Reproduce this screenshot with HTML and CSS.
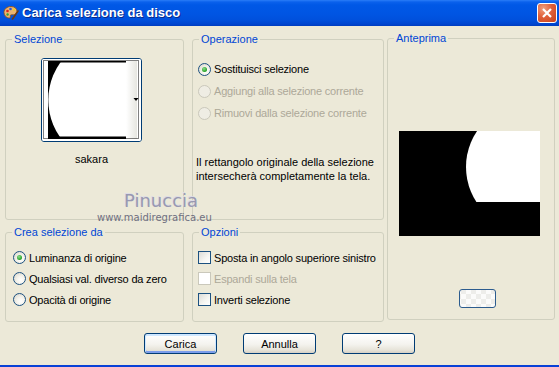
FILE: index.html
```html
<!DOCTYPE html>
<html>
<head>
<meta charset="utf-8">
<title>Carica selezione da disco</title>
<link rel="stylesheet" href="styles.css">
</head>
<body>
<div class="window">
    <div class="titlebar">
        <svg class="app-icon" viewBox="0 0 16 16">
            <path d="M8 1.5C4 1.5 1 4 1 7.5c0 3 2.5 5.5 5 5.5 1.3 0 1.6-.8 1.3-1.6-.3-.9.3-1.6 1.2-1.6h2c2 0 3.5-1.3 3.5-3.3C14 3.5 11.5 1.5 8 1.5z" fill="#E9B472" stroke="#8A4B14" stroke-width="0.8"/>
            <circle cx="4.5" cy="6" r="1.3" fill="#D8241C"/>
            <circle cx="7.5" cy="4" r="1.3" fill="#2C5AE0"/>
            <circle cx="11" cy="4.6" r="1.2" fill="#F2D21B"/>
            <circle cx="4.6" cy="9.5" r="1.2" fill="#2FA33A"/>
            <path d="M15 6L9.5 14" stroke="#6B3A12" stroke-width="1.6" stroke-linecap="round"/>
        </svg>
        <span class="title">Carica selezione da disco</span>
        <div class="close-btn">
            <svg width="18" height="18" viewBox="0 0 18 18"><path d="M5 5L13 13M13 5L5 13" stroke="#fff" stroke-width="2.2"/></svg>
        </div>
    </div>
    <div class="client">
        <div class="panes">
            <div class="col col-left">
                <fieldset class="group group-sel">
                    <legend>Selezione</legend>
                    <div class="thumb-wrap">
                        <div class="thumb">
                            <svg width="99" height="82" viewBox="0 0 99 82">
                                <defs>
                                    <clipPath id="tc"><rect x="6" y="3.5" width="78" height="74"/></clipPath>
                                    <linearGradient id="strip" x1="0" x2="1"><stop offset="0" stop-color="#fff"/><stop offset="1" stop-color="#E6E6E0"/></linearGradient>
                                </defs>
                                <rect width="99" height="82" fill="#fff"/>
                                <rect x="84" y="2" width="11" height="78" fill="url(#strip)"/>
                                <rect x="6" y="2" width="78" height="78" fill="#000"/>
                                <circle cx="70.7" cy="41" r="64.4" fill="#fff" clip-path="url(#tc)"/>
                                <path d="M91.5 39h5l-2.5 3z" fill="#000"/>
                                <rect x="1.5" y="1.5" width="95" height="78" fill="none" stroke="#000" stroke-dasharray="1 1"/>
                            </svg>
                        </div>
                        <div class="thumb-name">sakara</div>
                    </div>
                </fieldset>
                <fieldset class="group group-crea">
                    <legend>Crea selezione da</legend>
                    <div class="opts">
                        <div class="opt"><span class="radio checked"></span>Luminanza di origine</div>
                        <div class="opt"><span class="radio"></span>Qualsiasi val. diverso da zero</div>
                        <div class="opt"><span class="radio"></span>Opacità di origine</div>
                    </div>
                </fieldset>
            </div>
            <div class="col col-mid">
                <fieldset class="group group-op">
                    <legend>Operazione</legend>
                    <div class="opts">
                        <div class="opt"><span class="radio checked"></span>Sostituisci selezione</div>
                        <div class="opt off"><span class="radio"></span>Aggiungi alla selezione corrente</div>
                        <div class="opt off"><span class="radio"></span>Rimuovi dalla selezione corrente</div>
                    </div>
                    <p class="note">Il rettangolo originale della selezione<br>intersecherà completamente la tela.</p>
                </fieldset>
                <fieldset class="group group-opz">
                    <legend>Opzioni</legend>
                    <div class="opts">
                        <div class="opt"><span class="check"></span>Sposta in angolo superiore sinistro</div>
                        <div class="opt off"><span class="check"></span>Espandi sulla tela</div>
                        <div class="opt"><span class="check"></span>Inverti selezione</div>
                    </div>
                </fieldset>
            </div>
            <fieldset class="group group-prev">
                <legend>Anteprima</legend>
                <svg class="preview-img" viewBox="0 0 141 105">
                    <defs><clipPath id="pc"><rect width="141" height="71"/></clipPath></defs>
                    <rect width="141" height="105" fill="#000"/>
                    <circle cx="131" cy="36" r="64" fill="#fff" clip-path="url(#pc)"/>
                </svg>
                <div class="mini-btn"></div>
            </fieldset>
        </div>
        <div class="buttons">
            <div class="btn default">Carica</div>
            <div class="btn">Annulla</div>
            <div class="btn">?</div>
        </div>
        <span class="wm-name">Pinuccia</span>
        <span class="wm-url">www.maidiregrafica.eu</span>
    </div>
    <div class="window-edge"></div>
</div>
</body>
</html>
```
FILE: styles.css
```css
* {
    margin: 0;
    padding: 0;
    box-sizing: border-box;
}
body {
    width: 559px;
    height: 367px;
    overflow: hidden;
    background: #ECE9D8;
    font-family: "Liberation Sans", Arial, sans-serif;
    font-size: 11px;
    color: #000;
}
.window {
    width: 559px;
    height: 367px;
    display: flex;
    flex-direction: column;
}
.titlebar {
    height: 26px;
    display: flex;
    align-items: center;
    padding: 0 0 1px 3px;
    background: linear-gradient(#2A7DF7 0, #0A61EC 2px, #0058E6 5px, #0055E3 14px, #0050DC 20px, #0046CF 24px, #003DBF 26px);
}
.app-icon {
    width: 16px;
    height: 16px;
    margin-right: 3px;
}
.title {
    font: bold 13px "Liberation Sans", Arial, sans-serif;
    color: #fff;
    text-shadow: 1px 1px 0 #0A2A8A;
}
.close-btn {
    margin-left: auto;
    margin-right: 2px;
    width: 20px;
    height: 20px;
    border: 1px solid #fff;
    border-radius: 3px;
    background: radial-gradient(circle at 30% 25%, #F0A080 0, #E0603A 45%, #C8421C 100%);
}
.close-btn svg {
    display: block;
}
.client {
    height: 339px;
    position: relative;
    background: #ECE9D8;
}
.window-edge {
    height: 2px;
    background: #0841D6;
}
.panes {
    display: flex;
    padding: 6px 0 0 5px;
}
.col {
    display: flex;
    flex-direction: column;
    gap: 5px;
}
.col-left {
    width: 179px;
}
.col-mid {
    width: 192px;
    margin-left: 8px;
}
.group {
    border: 1px solid #D0D0BF;
    border-radius: 3px;
    padding: 0 4px;
    min-width: 0;
}
.group legend {
    margin-left: 2px;
    padding: 0 2px;
    line-height: 14px;
    color: #0046D5;
}
.group-sel,
.group-op {
    height: 188px;
}
.group-crea,
.group-opz {
    height: 97px;
}
.group-prev {
    width: 168px;
    height: 289px;
    margin: -1px 0 0 3px;
}

/* selezione */
.thumb-wrap {
    width: 101px;
    margin: 12px 0 0 31px;
    text-align: center;
}
.thumb {
    width: 101px;
    height: 84px;
    border: 1px solid #003C74;
    border-radius: 3px;
    background: #fff;
    overflow: hidden;
}
.thumb svg {
    display: block;
}
.thumb-name {
    margin-top: 10px;
    line-height: 14px;
}

/* radio e caselle */
.opts {
    padding: 8px 0 0 3px;
}
.opt {
    display: flex;
    align-items: center;
    height: 21px;
    white-space: nowrap;
    letter-spacing: -0.2px;
}
.group-op .opts {
    padding: 12px 0 0 1px;
}
.group-op .opt {
    height: 22px;
}
.group-opz .opts {
    padding-left: 1px;
}
.opt.off {
    color: #ACA899;
}
.radio {
    flex: none;
    width: 13px;
    height: 13px;
    margin-right: 3px;
    border: 1px solid #1C5180;
    border-radius: 50%;
    background: radial-gradient(circle at 62% 65%, #fff 0, #F4F3EC 40%, #D4D1C6 100%);
    display: flex;
    align-items: center;
    justify-content: center;
}
.radio.checked::after {
    content: "";
    width: 5px;
    height: 5px;
    border-radius: 50%;
    background: radial-gradient(circle at 40% 35%, #8EDB8E, #21A121 70%);
}
.off .radio {
    border-color: #CAC8BB;
    background: #EFEDE4;
}
.check {
    flex: none;
    width: 13px;
    height: 13px;
    margin-right: 3px;
    border: 1px solid #1C5180;
    background: linear-gradient(135deg, #DCDCD7, #F6F6F2 60%, #fff);
}
.off .check {
    border-color: #CAC8BB;
    background: #fff;
}
.note {
    margin: 31px 0 0 -1px;
    line-height: 14px;
}

/* anteprima */
.preview-img {
    display: block;
    width: 141px;
    height: 105px;
    margin: 86px 0 0 7px;
}
.mini-btn {
    width: 37px;
    height: 19px;
    margin: 53px 0 0 67px;
    border: 1px solid #2C5C8E;
    border-radius: 3px;
    background: repeating-conic-gradient(#EDEDEA 0 25%, #FBFBFA 0 50%) 11px 4px / 10px 10px;
}

/* pulsanti */
.buttons {
    display: flex;
    justify-content: center;
    gap: 26px;
    margin-top: 11px;
}
.btn {
    width: 73px;
    height: 21px;
    border: 1px solid #003C74;
    border-radius: 3px;
    background: linear-gradient(#fff, #F4F3EE 55%, #E6E3D8 85%, #D6D0C5);
    display: flex;
    align-items: center;
    justify-content: center;
}
.btn.default {
    box-shadow: inset 0 1px 0 1px #CEE7FF, inset 0 -1px 0 1px #7B9DEB;
}

/* filigrana */
.wm-name {
    position: absolute;
    left: 124px;
    top: 165px;
    font: 18px/20px "DejaVu Sans", sans-serif;
    color: #9898B2;
    text-shadow: -1px -1px 0 #DCDCE6;
}
.wm-url {
    position: absolute;
    left: 97px;
    top: 186px;
    font: 10px/12px "DejaVu Sans", sans-serif;
    color: #6F6F80;
}
```
